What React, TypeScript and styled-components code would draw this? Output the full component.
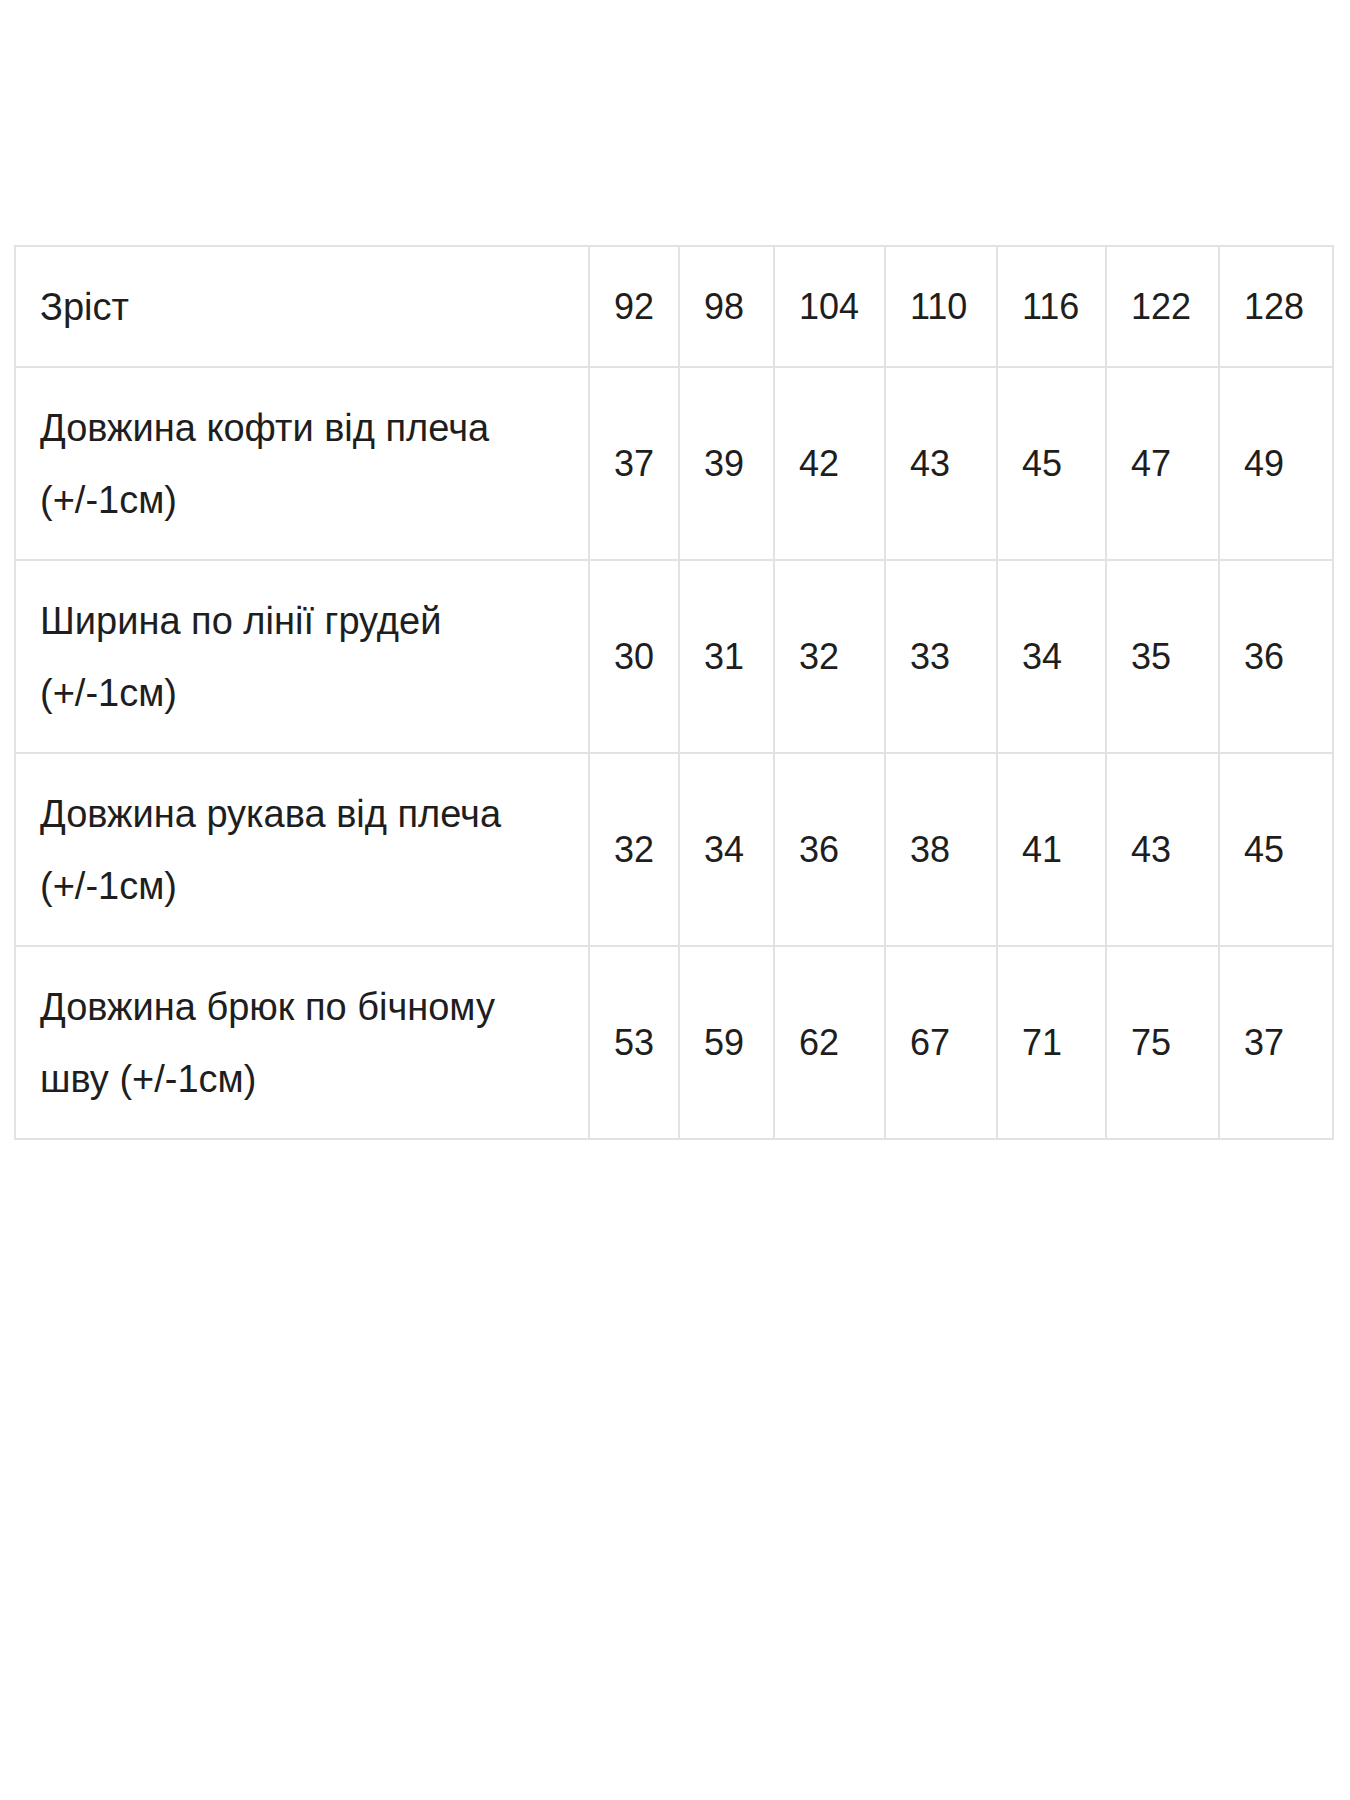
import React from "react";
import styled, { createGlobalStyle } from "styled-components";

const GlobalStyle = createGlobalStyle`
  html, body {
    margin: 0;
    padding: 0;
    background: #ffffff;
  }
  body {
    font-family: Arial, "Liberation Sans", sans-serif;
    color: #222222;
  }
`;

const Page = styled.main`
  padding: 245px 18px 0 14px;
  min-height: 1800px;
  box-sizing: border-box;
`;

const Table = styled.table`
  width: 1318px;
  border-collapse: collapse;
  table-layout: fixed;
  border: 2px solid #e2e2e2;
`;

const Col = styled.col<{ $w: number }>`
  width: ${(p) => p.$w}px;
`;

const Cell = styled.td<{ $label?: boolean }>`
  border: 2px solid #e2e2e2;
  padding: 24px 18px 23px ${(p) => (p.$label ? 24 : 24)}px;
  font-family: Arial, "Liberation Sans", sans-serif;
  font-size: ${(p) => (p.$label ? 38 : 36)}px;
  line-height: 72px;
  color: #1e1e1e;
  vertical-align: middle;
  text-align: left;
  white-space: ${(p) => (p.$label ? "normal" : "nowrap")};
`;

const widths = [574, 90, 95, 111, 112, 109, 113, 114];

const rows: { label: React.ReactNode; values: string[] }[] = [
  { label: "Зріст", values: ["92", "98", "104", "110", "116", "122", "128"] },
  {
    label: (
      <>
        Довжина кофти від плеча
        <br />
        (+/-1см)
      </>
    ),
    values: ["37", "39", "42", "43", "45", "47", "49"],
  },
  {
    label: (
      <>
        Ширина по лінії грудей
        <br />
        (+/-1см)
      </>
    ),
    values: ["30", "31", "32", "33", "34", "35", "36"],
  },
  {
    label: (
      <>
        Довжина рукава від плеча
        <br />
        (+/-1см)
      </>
    ),
    values: ["32", "34", "36", "38", "41", "43", "45"],
  },
  {
    label: (
      <>
        Довжина брюк по бічному
        <br />
        шву (+/-1см)
      </>
    ),
    values: ["53", "59", "62", "67", "71", "75", "37"],
  },
];

export default function App() {
  return (
    <>
      <GlobalStyle />
      <Page>
        <Table>
          <colgroup>
            {widths.map((w, i) => (
              <Col key={i} $w={w} />
            ))}
          </colgroup>
          <tbody>
            {rows.map((r, i) => (
              <tr key={i}>
                <Cell $label>{r.label}</Cell>
                {r.values.map((v, j) => (
                  <Cell key={j}>{v}</Cell>
                ))}
              </tr>
            ))}
          </tbody>
        </Table>
      </Page>
    </>
  );
}
